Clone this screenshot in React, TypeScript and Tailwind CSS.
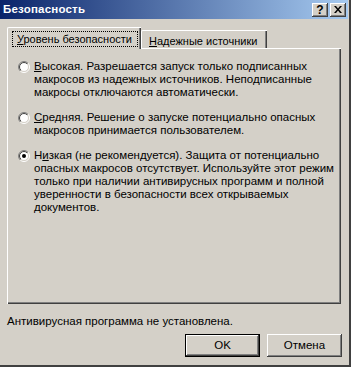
import React from "react";

const raised =
  "shadow-[inset_-1px_-1px_#404040,inset_1px_1px_#ffffff,inset_-2px_-2px_#808080,inset_2px_2px_#d4d0c8]";

function Radio({ checked }: { checked?: boolean }) {
  return (
    <svg width="12" height="12" viewBox="0 0 12 12" className="shrink-0">
      <defs>
        <linearGradient id="ro" x1="0" y1="0" x2="1" y2="1">
          <stop offset="0.5" stopColor="#808080" />
          <stop offset="0.5" stopColor="#ffffff" />
        </linearGradient>
        <linearGradient id="ri" x1="0" y1="0" x2="1" y2="1">
          <stop offset="0.5" stopColor="#404040" />
          <stop offset="0.5" stopColor="#d4d0c8" />
        </linearGradient>
      </defs>
      <circle cx="6" cy="6" r="5.5" fill="none" stroke="url(#ro)" strokeWidth="1" />
      <circle cx="6" cy="6" r="4.5" fill="#ffffff" stroke="url(#ri)" strokeWidth="1" />
      {checked && <circle cx="6" cy="6" r="2" fill="#000000" />}
    </svg>
  );
}

function Option({ checked, lines }: { checked?: boolean; lines: React.ReactNode[] }) {
  return (
    <div className="flex gap-[4px]">
      <div className="pt-[1px]">
        <Radio checked={checked} />
      </div>
      <div className="leading-[13px]">
        {lines.map((l, i) => (
          <div key={i} className="whitespace-nowrap">
            {l}
          </div>
        ))}
      </div>
    </div>
  );
}

export default function App() {
  return (
    <div className="w-[351px] h-[367px] bg-[#d4d0c8] text-black text-[11.5px] [font-family:'Liberation_Sans',Arial,sans-serif] flex flex-col overflow-hidden border-r-2 border-b-2 border-r-[#404040] border-b-[#404040]">
      {/* title bar */}
      <div className="h-[19px] mr-[1px] flex items-center justify-between pl-[3px] pr-[2px] bg-[linear-gradient(90deg,#0a246a_0%,#a6caf0_100%)]">
        <span className="text-white font-bold text-[11.5px] tracking-[0.2px]">Безопасность</span>
        <div className="flex gap-[2px]">
          <div className={`w-[16px] h-[14px] bg-[#d4d0c8] ${raised} flex items-center justify-center font-bold text-[12px] leading-none`}>
            ?
          </div>
          <div className={`w-[16px] h-[14px] bg-[#d4d0c8] ${raised} flex items-center justify-center`}>
            <svg width="8" height="7" viewBox="0 0 8 7">
              <path d="M0 0h2l2 2.5L6 0h2L5 3.5 8 7H6L4 4.5 2 7H0l3-3.5z" fill="#000" />
            </svg>
          </div>
        </div>
      </div>

      <div className="flex-1 flex flex-col pl-[7px] pr-[7px] pt-[9px]">
        {/* tabs */}
        <div className="flex items-end h-[21px] relative z-10 -mb-[1px] text-[11px]">
          <div className="w-[134px] h-[22px] bg-[#d4d0c8] border-l border-t border-white rounded-tl-[2px] shadow-[inset_-1px_0_#404040,inset_-2px_0_#808080] flex items-start pl-[4px] pt-[3px]">
            <span className="border border-dotted border-black pl-[4px] h-[16px] leading-[14px] w-[126px] whitespace-nowrap">
              <span className="underline">У</span>ровень безопасности
            </span>
          </div>
          <div className="w-[126px] h-[18px] bg-[#d4d0c8] border-l border-t border-white rounded-tl-[2px] shadow-[inset_-1px_0_#404040,inset_-2px_0_#808080] pl-[7px] pt-[2px] whitespace-nowrap mb-[1px]">
            <span className="underline">Н</span>адежные источники
          </div>
        </div>

        {/* panel */}
        <div className="h-[256px] w-[334px] border-l border-t border-white shadow-[inset_-1px_-1px_#404040,inset_-2px_-2px_#808080] pl-[10px] pt-[11px] flex flex-col gap-[12px]">
          <Option
            lines={[
              <>
                <span className="underline">В</span>ысокая. Разрешается запуск только подписанных
              </>,
              "макросов из надежных источников. Неподписанные",
              "макросы отключаются автоматически.",
            ]}
          />
          <Option
            lines={[
              <>
                <span className="underline">С</span>редняя. Решение о запуске потенциально опасных
              </>,
              "макросов принимается пользователем.",
            ]}
          />
          <Option
            checked
            lines={[
              <>
                Н<span className="underline">и</span>зкая (не рекомендуется). Защита от потенциально
              </>,
              "опасных макросов отсутствует. Используйте этот режим",
              "только при наличии антивирусных программ и полной",
              "уверенности в безопасности всех открываемых",
              "документов.",
            ]}
          />
        </div>

        <div className="mt-[10px] h-[14px] leading-[14px]">Антивирусная программа не установлена.</div>

        <div className="flex justify-end gap-[7px] mt-[6px]">
          <div className={`w-[75px] h-[23px] border border-black ${raised} flex items-center justify-center`}>
            OK
          </div>
          <div className={`w-[75px] h-[23px] ${raised} flex items-center justify-center`}>Отмена</div>
        </div>
      </div>
    </div>
  );
}
